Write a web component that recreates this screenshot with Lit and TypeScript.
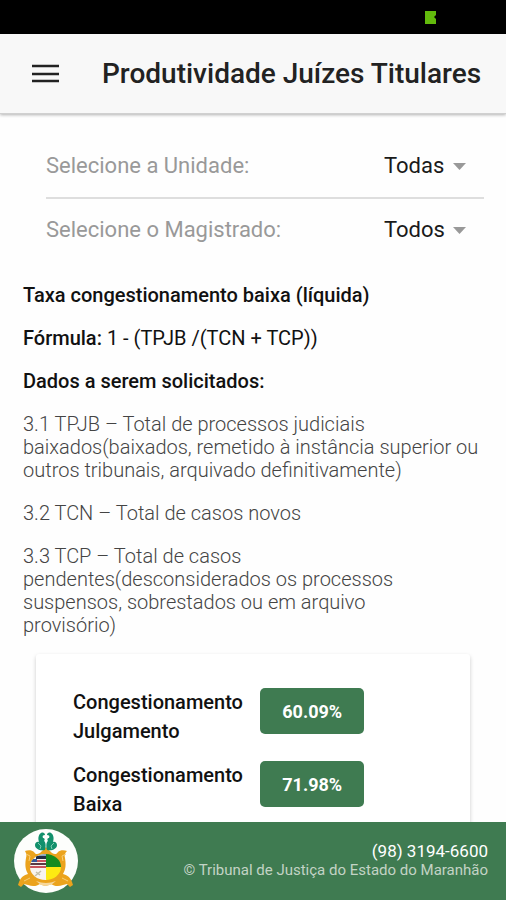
import { LitElement, html, css, svg } from "lit";
import { customElement, property } from "lit/decorators.js";

interface Rate {
  label: string;
  value: string;
}

const rates: Rate[] = [
  { label: "Congestionamento Julgamento", value: "60.09%" },
  { label: "Congestionamento Baixa", value: "71.98%" },
];

const requestedData: string[] = [
  "3.1 TPJB – Total de processos judiciais baixados(baixados, remetido à instância superior ou outros tribunais, arquivado definitivamente)",
  "3.2 TCN – Total de casos novos",
  "3.3 TCP – Total de casos pendentes(desconsiderados os processos suspensos, sobrestados ou em arquivo\nprovisório)",
];

// State coat of arms: laurel on top, golden scrolls, oval shield
const emblem = svg`
  <circle cx="32" cy="32" r="32" fill="#fdfefc"/>
  <path fill="#eba31d" d="M11 22c3-1 7-1 9 1 1 2 3 3 6 1l6-6 6 6c3 2 5 1 6-1 2-2 6-2 9-1-2 2-3 4-2 7 1 6 1 11-2 16 4 1 7 3 9 8l1 3-3 2-3-3-4 1c-5 2-9 1-12-1-3 2-8 2-11 0-3 2-7 3-12 1l-4-1-3 3-3-2 1-3c2-5 5-7 9-8-3-5-3-10-2-16 1-3 0-5-1-7z"/>
  <path d="M22 52q10 4 20 0l-5 4H27z" fill="#f6d79a"/>
  <path d="M12 25l4 2-1 5M52 25l-4 2 1 5M10 52l6-3M54 52l-6-3" stroke="#f8cf77" stroke-width="1" fill="none"/>
  <g fill="#12906c">
    <path d="M31 21c-5 1-10-1-10-5 0-2 2-4 4-3-1-3-1-7 2-9 2-1 4 0 4 2-2 0-3 1-2 3 2 0 2 2 1 3 2 1 2 6 1 9z"/>
    <path d="M33 21c5 1 10-1 10-5 0-2-2-4-4-3 1-3 1-7-2-9-2-1-4 0-4 2 2 0 3 1 2 3-2 0-2 2-1 3-2 1-2 6-1 9z"/>
  </g>
  <path d="M24 14l3 3-1 3M40 14l-3 3 1 3" stroke="#7fc9b0" stroke-width="1" fill="none"/>
  <clipPath id="shield"><ellipse cx="31.500" cy="38" rx="15.500" ry="13"/></clipPath>
  <g clip-path="url(#shield)">
    <rect x="16" y="24" width="17" height="28" fill="#f8f4ef"/>
    <rect x="16" y="25" width="17" height="3" fill="#8aa4bd"/>
    <rect x="22" y="27" width="11" height="3" fill="#222c45"/>
    <rect x="16" y="30" width="7" height="3" fill="#35579a"/>
    <rect x="23" y="31" width="10" height="2" fill="#c9545c"/>
    <rect x="16" y="34" width="17" height="2" fill="#5c3a45"/>
    <rect x="16" y="37" width="17" height="2" fill="#c9545c"/>
    <path d="M21 47l6-5m-5 1l4 3" stroke="#c3bfa9" stroke-width="1.500" fill="none"/>
    <rect x="32" y="24" width="17" height="14" fill="#148c1f"/>
    <rect x="32" y="38" width="17" height="14" fill="#fdea12"/>
  </g>
`;

@customElement("select-row")
export class SelectRow extends LitElement {
  @property() label = "";
  @property() option = "";

  static styles = css`
    :host {
      display: block;
    }
    .row {
      display: flex;
      align-items: center;
      justify-content: space-between;
      height: 62px;
      padding-right: 18px;
    }
    .label {
      color: #999;
    }
    .picker {
      display: grid;
      align-items: center;
    }
    .select {
      grid-area: 1 / 1;
      appearance: none;
      border: 0;
      margin: 0;
      padding: 0 21px 0 0;
      background: none;
      font: inherit;
      color: #1a1a1a;
    }
    .arrow {
      grid-area: 1 / 1;
      justify-self: end;
      width: 13px;
      height: 7px;
      pointer-events: none;
    }
  `;

  render() {
    return html`
      <div class="row">
        <label class="label" for="choice">${this.label}</label>
        <span class="picker">
          <select class="select" id="choice">
            <option>${this.option}</option>
          </select>
          <svg class="arrow" viewBox="0 0 13 7" aria-hidden="true">
            <path d="M0 0h13L6.500 7z" fill="#999" />
          </svg>
        </span>
      </div>
    `;
  }
}

@customElement("app-root")
export class AppRoot extends LitElement {
  static styles = css`
    :host {
      display: flex;
      flex-direction: column;
      height: 100vh;
      overflow: hidden;
      background: #fefefe;
      color: #111;
      font-family: Roboto, "Liberation Sans", sans-serif;
      font-size: 20px;
      line-height: 23px;
    }
    .status {
      flex: none;
      display: flex;
      justify-content: flex-end;
      align-items: center;
      height: 34px;
      padding-right: 70px;
      box-sizing: border-box;
      background: #000;
    }
    .battery {
      width: 11px;
      height: 13px;
    }
    .header {
      flex: none;
      display: flex;
      align-items: center;
      gap: 42px;
      height: 80px;
      padding: 0 20px 0 32px;
      box-sizing: border-box;
      background: #f8f8f8;
      border-bottom: 1px solid #d0d0d0;
      box-shadow: 0 1px 3px rgba(0, 0, 0, 0.3);
      z-index: 1;
    }
    .menu {
      flex: none;
      display: flex;
      border: 0;
      margin: 0;
      padding: 0;
      background: none;
    }
    .menu-icon {
      width: 28px;
      height: 20px;
    }
    .title {
      margin: 0;
      font-size: 28px;
      line-height: 34px;
      font-weight: 500;
      color: #222;
      white-space: nowrap;
    }
    .content {
      flex: 1;
      min-height: 0;
      overflow: hidden;
      padding-top: 21px;
    }
    .filters {
      margin: 0 22px 0 46px;
      font-size: 22px;
      line-height: 30px;
    }
    .divided {
      border-bottom: 2px solid #dedede;
    }
    .details {
      display: flex;
      flex-direction: column;
      gap: 20px;
      padding: 0 23px;
      margin: 23px 0 17px;
    }
    .text {
      margin: 0;
      white-space: pre-line;
    }
    .strong {
      font-weight: 500;
    }
    .light {
      font-weight: 300;
      color: #444;
    }
    .card {
      display: flex;
      flex-direction: column;
      gap: 15px;
      margin: 0 36px;
      padding: 34px 37px;
      border-radius: 3px;
      background: #fff;
      box-shadow: 0 2px 4px rgba(0, 0, 0, 0.2);
    }
    .rate {
      display: grid;
      grid-template-columns: 47% auto;
      gap: 18px;
      justify-content: start;
      align-items: start;
      line-height: 29px;
      font-weight: 500;
    }
    .value {
      height: 46px;
      width: 104px;
      border: 0;
      padding: 0;
      border-radius: 5px;
      background: #3f7b51;
      color: #fff;
      font: inherit;
      font-size: 18px;
      font-weight: 700;
    }
    .footer {
      flex: none;
      display: flex;
      align-items: center;
      justify-content: space-between;
      height: 78px;
      padding: 0 18px 0 14px;
      box-sizing: border-box;
      background: #3f7b51;
    }
    .emblem {
      flex: none;
      width: 64px;
      height: 64px;
    }
    .contact {
      display: flex;
      flex-direction: column;
      align-items: flex-end;
      font-size: 15px;
      line-height: 19px;
      color: #c3d3c5;
    }
    .phone {
      font-size: 17px;
      color: #fff;
      text-decoration: none;
    }
  `;

  render() {
    return html`
      <div class="status">
        <svg class="battery" viewBox="0 0 11 13" aria-hidden="true">
          <path d="M0 0h11v4L9 6l2 2v5H0z" fill="#62ba0c" />
        </svg>
      </div>
      <header class="header">
        <button class="menu" aria-label="Menu">
          <svg class="menu-icon" viewBox="0 0 28 20" aria-hidden="true">
            <path d="M0 2h27M0 10h27M0 17h27" stroke="#222" stroke-width="2.400" />
          </svg>
        </button>
        <h1 class="title">Produtividade Juízes Titulares</h1>
      </header>
      <main class="content">
        <div class="filters">
          <select-row class="divided" label="Selecione a Unidade:" option="Todas"></select-row>
          <select-row label="Selecione o Magistrado:" option="Todos"></select-row>
        </div>
        <section class="details">
          <p class="text strong">Taxa congestionamento baixa (líquida)</p>
          <p class="text"><span class="strong">Fórmula:</span> 1 - (TPJB /(TCN + TCP))</p>
          <p class="text strong">Dados a serem solicitados:</p>
          ${requestedData.map((item) => html`<p class="text light">${item}</p>`)}
        </section>
        <section class="card">
          ${rates.map(
            (rate) => html`
              <div class="rate">
                <span>${rate.label}</span>
                <button class="value" aria-label="${rate.label}: ${rate.value}">${rate.value}</button>
              </div>
            `
          )}
        </section>
      </main>
      <footer class="footer">
        <svg class="emblem" viewBox="0 0 64 64" aria-hidden="true">${emblem}</svg>
        <div class="contact">
          <a class="phone" href="tel:+559831946600">(98) 3194-6600</a>
          <span>© Tribunal de Justiça do Estado do Maranhão</span>
        </div>
      </footer>
    `;
  }
}
